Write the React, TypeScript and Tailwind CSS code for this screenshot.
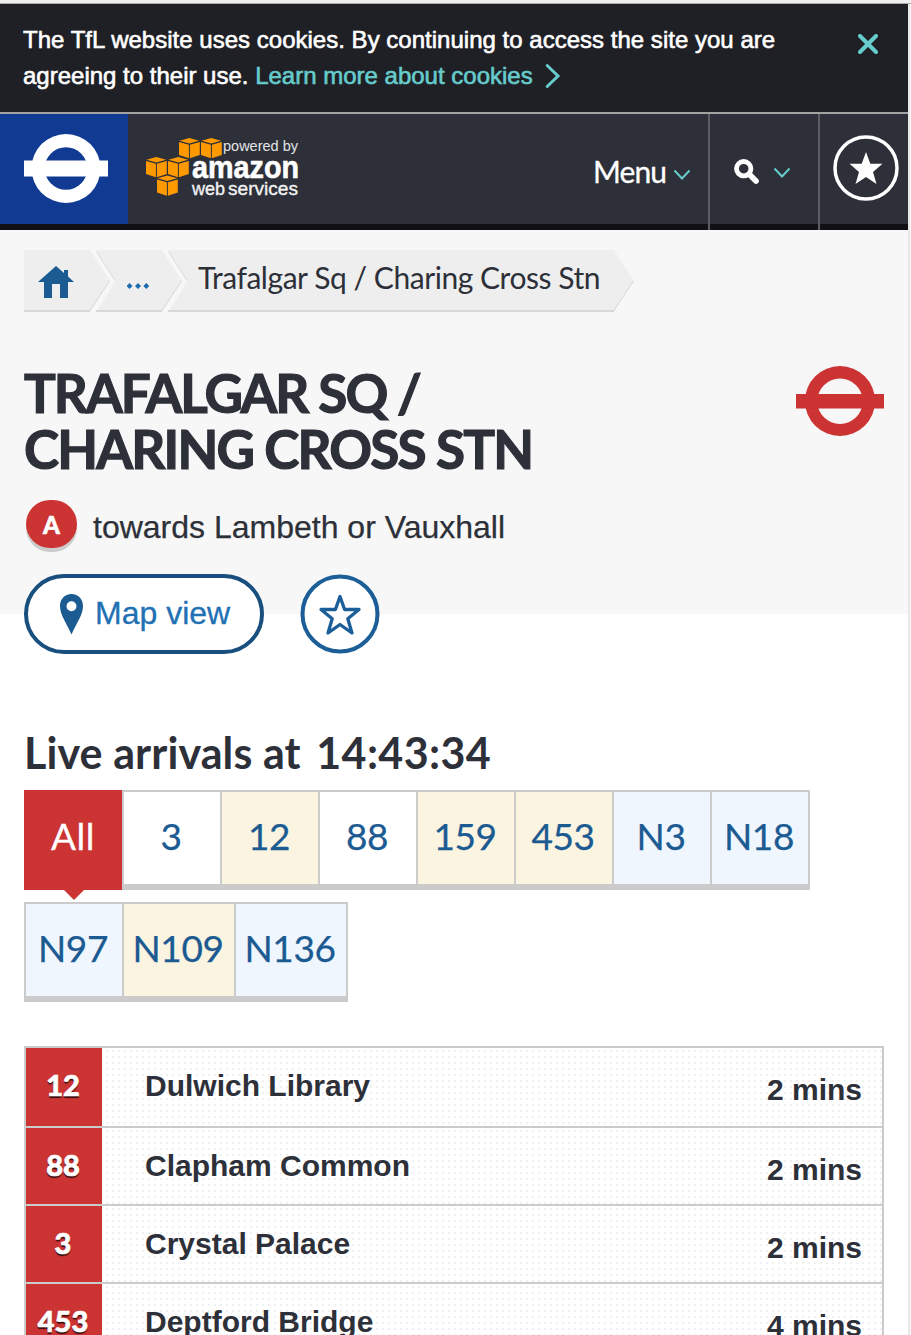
import React from "react";

const johnston = "font-[Lato,'Open_Sans',sans-serif]";

type Tone = "white" | "cream" | "ice";

interface Route {
  id: string;
  tone: Tone;
  width: string;
}

const tones: Record<Tone, string> = {
  white: "bg-white",
  cream: "bg-[#faf4e1]",
  ice: "bg-[#eff6fe]",
};

const firstRow: Route[] = [
  { id: "3", tone: "white", width: "w-[98px]" },
  { id: "12", tone: "cream", width: "w-[98px]" },
  { id: "88", tone: "white", width: "w-[98px]" },
  { id: "159", tone: "cream", width: "w-[98px]" },
  { id: "453", tone: "cream", width: "w-[98px]" },
  { id: "N3", tone: "ice", width: "w-[98px]" },
  { id: "N18", tone: "ice", width: "w-[100px] border-r-2" },
];

const secondRow: Route[] = [
  { id: "N97", tone: "ice", width: "w-[98px]" },
  { id: "N109", tone: "cream", width: "w-[112px]" },
  { id: "N136", tone: "ice", width: "w-[114px] border-r-2" },
];

const arrivals = [
  { route: "12", to: "Dulwich Library", due: "2 mins", height: "h-[80px]" },
  { route: "88", to: "Clapham Common", due: "2 mins", height: "h-[78px]" },
  { route: "3", to: "Crystal Palace", due: "2 mins", height: "h-[78px]" },
  { route: "453", to: "Deptford Bridge", due: "4 mins", height: "h-[78px]" },
];

function RouteTab({ route }: { route: Route }) {
  return (
    <button
      className={`${johnston} ${tones[route.tone]} ${route.width} flex h-[100px] shrink-0 items-center justify-center border-t-2 border-b-6 border-l-2 border-[#cbcbcb] pr-[2px] pb-[6px] text-[37px] leading-none tracking-[-0.4px] text-[#1c5a92] [-webkit-text-stroke:0.25px_currentColor]`}
    >
      {route.id}
    </button>
  );
}

function TflRoundel() {
  return (
    <svg width="84" height="69" viewBox="0 0 84 69" fill="white">
      <path
        fillRule="evenodd"
        d="M42 0a34.5 34.5 0 1 0 0 69a34.5 34.5 0 1 0 0-69zM42 13.2a21.3 21.3 0 1 1 0 42.6a21.3 21.3 0 1 1 0-42.6z"
      />
      <path d="M0 26.5h84v16H0z" />
    </svg>
  );
}

function BusRoundel() {
  return (
    <svg width="88" height="70" viewBox="0 0 88 70" className="mt-px" fill="#cc3333">
      <path
        fillRule="evenodd"
        d="M44 0a35 35 0 1 0 0 70a35 35 0 1 0 0-70zM44 12.500a22.700 22.700 0 1 1 0 45.400a22.700 22.700 0 1 1 0-45.400z"
      />
      <path d="M0 28h88v14.500H0z" />
    </svg>
  );
}

function Cube({ x, y }: { x: number; y: number }) {
  return (
    <g transform={`translate(${x} ${y})`} fill="#ff9900">
      <path d="M0.5 2.8L10.3 0l9.8 2.8-9.8 2.6z" />
      <path d="M0 4.1l9.9 2.7v13.500L0 17z" />
      <path d="M10.900 6.800l9.900-2.700v12.900L10.900 20.300z" />
    </g>
  );
}

function AwsLogo() {
  return (
    <svg width="158" height="62" viewBox="0 0 158 62" className="mt-6 ml-[17px]">
      <Cube x={34} y={0} />
      <Cube x={56} y={0} />
      <Cube x={1} y={19} />
      <Cube x={23} y={19} />
      <Cube x={12} y={37.5} />
      <g fill="#fff" fontFamily="'Liberation Sans', sans-serif">
        <text x="78" y="12.5" fontSize="14.5" fill="#e4e4e6" textLength="75" lengthAdjust="spacingAndGlyphs">powered by</text>
        <text x="47" y="40" fontSize="31" fontWeight="700" textLength="107" lengthAdjust="spacingAndGlyphs" stroke="#fff" strokeWidth="0.6">amazon</text>
        <text x="47" y="57" fontSize="18.5" fill="#f2f2f2" stroke="#f2f2f2" strokeWidth="0.35" textLength="33" lengthAdjust="spacingAndGlyphs">web</text>
        <text x="83" y="57" fontSize="18.5" fill="#f2f2f2" stroke="#f2f2f2" strokeWidth="0.35" textLength="70" lengthAdjust="spacingAndGlyphs">services</text>
      </g>
    </svg>
  );
}

function ChevronDown() {
  return (
    <svg width="18" height="12" viewBox="0 0 18 12" fill="none" stroke="#66cccc" strokeWidth="2">
      <path d="M1.5 1.5L9 9.5l7.5-8" />
    </svg>
  );
}

function Crumb({
  width,
  notched,
  className,
  children,
}: {
  width: number;
  notched: boolean;
  className: string;
  children: React.ReactNode;
}) {
  const left = notched ? "L0 62L19.5 31z" : "L0 62z";
  return (
    <li className={`relative h-[62px] shrink-0 ${className}`}>
      <svg width={width} height="62" className="absolute inset-0">
        <path d={`M0 0H${width - 20}L${width} 31L${width - 20} 62${left}`} fill="#eeeeee" />
        <path d={`M${width - 0.5} 31L${width - 20.5} 61`} stroke="#d8d8d8" fill="none" />
        <path d={`M0 61H${width - 20}`} stroke="#d8d8d8" strokeWidth="2" />
        {notched && <path d="M0.5 1.5L19 30.5" stroke="#d9d9d9" fill="none" />}
      </svg>
      <div className="relative h-full">{children}</div>
    </li>
  );
}

export default function App() {
  return (
    <div className="flex h-[1335px] w-[911px] overflow-hidden bg-[#fafafa] font-['Liberation_Sans',Arial,sans-serif] text-[#2d3039]">
      <div className="flex w-full flex-col">
        <div className="h-1 shrink-0 border-b border-[#a9a9a9] bg-[#eeeeee]" />
        <div className="w-[910px] grow border-r-2 border-[#e8e8e8] bg-white">
          <div className="flex h-[110px] justify-between border-b-2 border-[#a3a3a3] bg-[#1f2025] pt-[18px] pr-[30px] pl-[23px] text-white">
            <p className="text-[24px] leading-[36px] whitespace-nowrap [-webkit-text-stroke:0.6px_currentColor]">
              <span className="block tracking-[0.015px]">The TfL website uses cookies. By continuing to access the site you are</span>
              <span className="flex items-center">
                <span>agreeing to their use.&nbsp;</span>
                <a className="text-[#66cccc]">Learn more about cookies</a>
                <svg width="16" height="26" viewBox="0 0 16 26" className="ml-3" fill="none" stroke="#66cccc" strokeWidth="3" strokeLinecap="round">
                  <path d="M2.2 2.5L13 13L2.2 23.5" strokeLinejoin="miter" />
                </svg>
              </span>
            </p>
            <svg width="20" height="20" viewBox="0 0 20 20" className="mt-3" stroke="#66cccc" strokeWidth="4" strokeLinecap="round">
              <path d="M2 2l16 16M18 2L2 18" />
            </svg>
          </div>

          <header className="flex h-[116px] border-b-6 border-[#111113] bg-[#2d3039] text-white">
            <div className="h-[110px] w-32 bg-[#113b92] pt-5 pl-6">
              <TflRoundel />
            </div>
            <AwsLogo />
            <nav className="ml-auto flex h-[116px]">
              <div className="flex w-[115px] pt-[37px]">
                <span className={`${johnston} w-20 text-[30px] leading-10 tracking-[-0.9px] [-webkit-text-stroke:0.3px_currentColor]`}>Menu</span>
                <span className="mt-[18px]"><ChevronDown /></span>
              </div>
              <div className="flex w-[110px] border-l-2 border-[#5c5e66] pt-[45px] pl-6">
                <svg width="25" height="25" viewBox="0 0 25 25" fill="none" stroke="white" className="shrink-0">
                  <circle cx="9.7" cy="9.7" r="7.2" strokeWidth="4.800" />
                  <path d="M15.5 15.5L22 22" strokeWidth="5.600" strokeLinecap="round" />
                </svg>
                <span className="mt-[8px] ml-[14px]"><ChevronDown /></span>
              </div>
              <div className="w-[90px] border-l-2 border-[#5c5e66] pt-[21px] pl-[13px]">
                <svg width="66" height="66" viewBox="0 0 66 66">
                  <circle cx="33" cy="33" r="31" fill="none" stroke="white" strokeWidth="3.5" />
                  <path fill="white" d="M33 17l4.3 11.7H49.5l-9.5 8.2 3.5 12.1L33 42l-10.5 7 3.5-12.1-9.5-8.2h12.2z" />
                </svg>
              </div>
            </nav>
          </header>

          <section className="flex h-[384px] flex-col bg-[#f7f7f7] px-6 pt-5">
            <ol className="flex">
              <Crumb width={86} notched={false} className="w-[86px]">
                <svg width="36" height="32" viewBox="0 0 36 32" className="translate-x-[14px] translate-y-[16px]" fill="#1c5a92">
                  <path d="M18 0l8 7V4h4v6.6L36 16h-6v16h-8V18h-8v14H6V16H0z" />
                </svg>
              </Crumb>
              <Crumb width={86} notched className="-ml-[14px] w-[86px]">
                <svg width="22" height="6" viewBox="0 0 22 6" className="translate-x-[31px] translate-y-[33px]" fill="#1c6bb0">
                  <path d="M2.500 0L5.500 3 2.500 6-.5 3zM11 0l3 3-3 3-3-3zM19.300 0l3 3-3 3-3-3z" />
                </svg>
              </Crumb>
              <Crumb width={466} notched className="-ml-[14px] w-[466px]">
                <span className={`${johnston} block pt-[7px] pl-[30px] text-[30px] leading-10 tracking-[-0.45px] whitespace-nowrap`}>
                  Trafalgar Sq / Charing Cross Stn
                </span>
              </Crumb>
            </ol>

            <div className="mt-[53px] flex justify-between">
              <h1 className={`${johnston} text-[53px] leading-[56px] font-bold whitespace-nowrap [-webkit-text-stroke:1.2px_currentColor]`}>
                <span className="block tracking-[-2px]">TRAFALGAR SQ /</span>
                <span className="block tracking-[-1.8px]">CHARING CROSS STN</span>
              </h1>
              <BusRoundel />
            </div>

            <div className="mt-[23px] flex items-center">
              <span className={`${johnston} ml-0.5 flex h-12 w-[51px] items-center justify-center rounded-full bg-[#cc3333] pt-px text-[24px] font-black text-white shadow-[0_4px_0_#cccccc] [-webkit-text-stroke:0.6px_currentColor]`}>
                A
              </span>
              <p className="mt-[6px] ml-[16px] text-[32px] leading-10 whitespace-nowrap [-webkit-text-stroke:0.25px_currentColor]">towards Lambeth or Vauxhall</p>
            </div>
          </section>

          <div className="-mt-10 flex px-6">
            <button className="flex h-20 w-60 rounded-full border-4 border-[#184f7e] bg-white pt-4 pl-[31px] text-[#2270b4]">
              <svg width="25" height="41" viewBox="0 0 25 41" className="shrink-0" fill="#1c5a92">
                <path fillRule="evenodd" d="M12.500 0C19.400 0 24 5 24 12c0 9-6.500 17-11.500 28.500C7.500 29 1 21 1 12 1 5 5.600 0 12.500 0zm0 7.300a5 5 0 1 0 0 10a5 5 0 1 0 0-10z" />
              </svg>
              <span className="ml-[11px] text-[32px] leading-[38px] whitespace-nowrap [-webkit-text-stroke:0.3px_currentColor]">Map view</span>
            </button>
            <svg width="80" height="80" viewBox="0 0 80 80" className="ml-9" stroke="#1c5e98">
              <circle cx="40" cy="40" r="37.500" fill="white" strokeWidth="4" />
              <path fill="none" strokeWidth="3.300" strokeLinejoin="round" d="M40 22.500l4.600 13h14.400l-11.200 9.200 4.200 14.300L40 50.500 28 59l4.200-14.300L21 35.500h14.400z" />
            </svg>
          </div>

          <main className="px-6">
            <h2 className={`${johnston} mt-[71px] text-[43px] leading-[56px] font-bold whitespace-nowrap`}>
              <span className="tracking-[0.1px]">Live arrivals at </span>
              <span className="ml-[5px] tracking-[0.4px]">14:43:34</span>
            </h2>

            <div className="mt-[9px] flex">
              <button className={`${johnston} relative flex h-[100px] w-[98px] items-center justify-center bg-[#cc3333] pb-[10px] text-[37px] leading-none tracking-[0.5px] text-white [-webkit-text-stroke:0.3px_currentColor]`}>
                All
                <span className="absolute top-[100px] left-10 border-x-10 border-t-10 border-x-transparent border-t-[#cc3333]" />
              </button>
              {firstRow.map((r) => <RouteTab key={r.id} route={r} />)}
            </div>
            <div className="mt-3 flex">
              {secondRow.map((r) => <RouteTab key={r.id} route={r} />)}
            </div>

            <ul className="mt-11 border-x-2 border-t-2 border-[#cbcbcb] text-[30px] leading-9 font-bold">
              {arrivals.map((a) => (
                <li key={a.route} className={`${a.height} flex items-stretch border-b-2 border-[#cbcbcb] bg-[radial-gradient(circle,#f0f0f0_1px,transparent_1.6px)] bg-[size:6px_6px]`}>
                  <span className={`${johnston} w-[76px] shrink-0 bg-[#cc3333] pt-[19px] pr-[2px] text-center text-[29px] font-black text-white [-webkit-text-stroke:0.7px_currentColor] [text-shadow:0_2px_1px_rgba(0,0,0,0.75)]`}>
                    {a.route}
                  </span>
                  <span className="grow pt-[20px] pl-[43px]">{a.to}</span>
                  <span className="pt-[24px] pr-[20px]">{a.due}</span>
                </li>
              ))}
            </ul>
          </main>
        </div>
      </div>
    </div>
  );
}
